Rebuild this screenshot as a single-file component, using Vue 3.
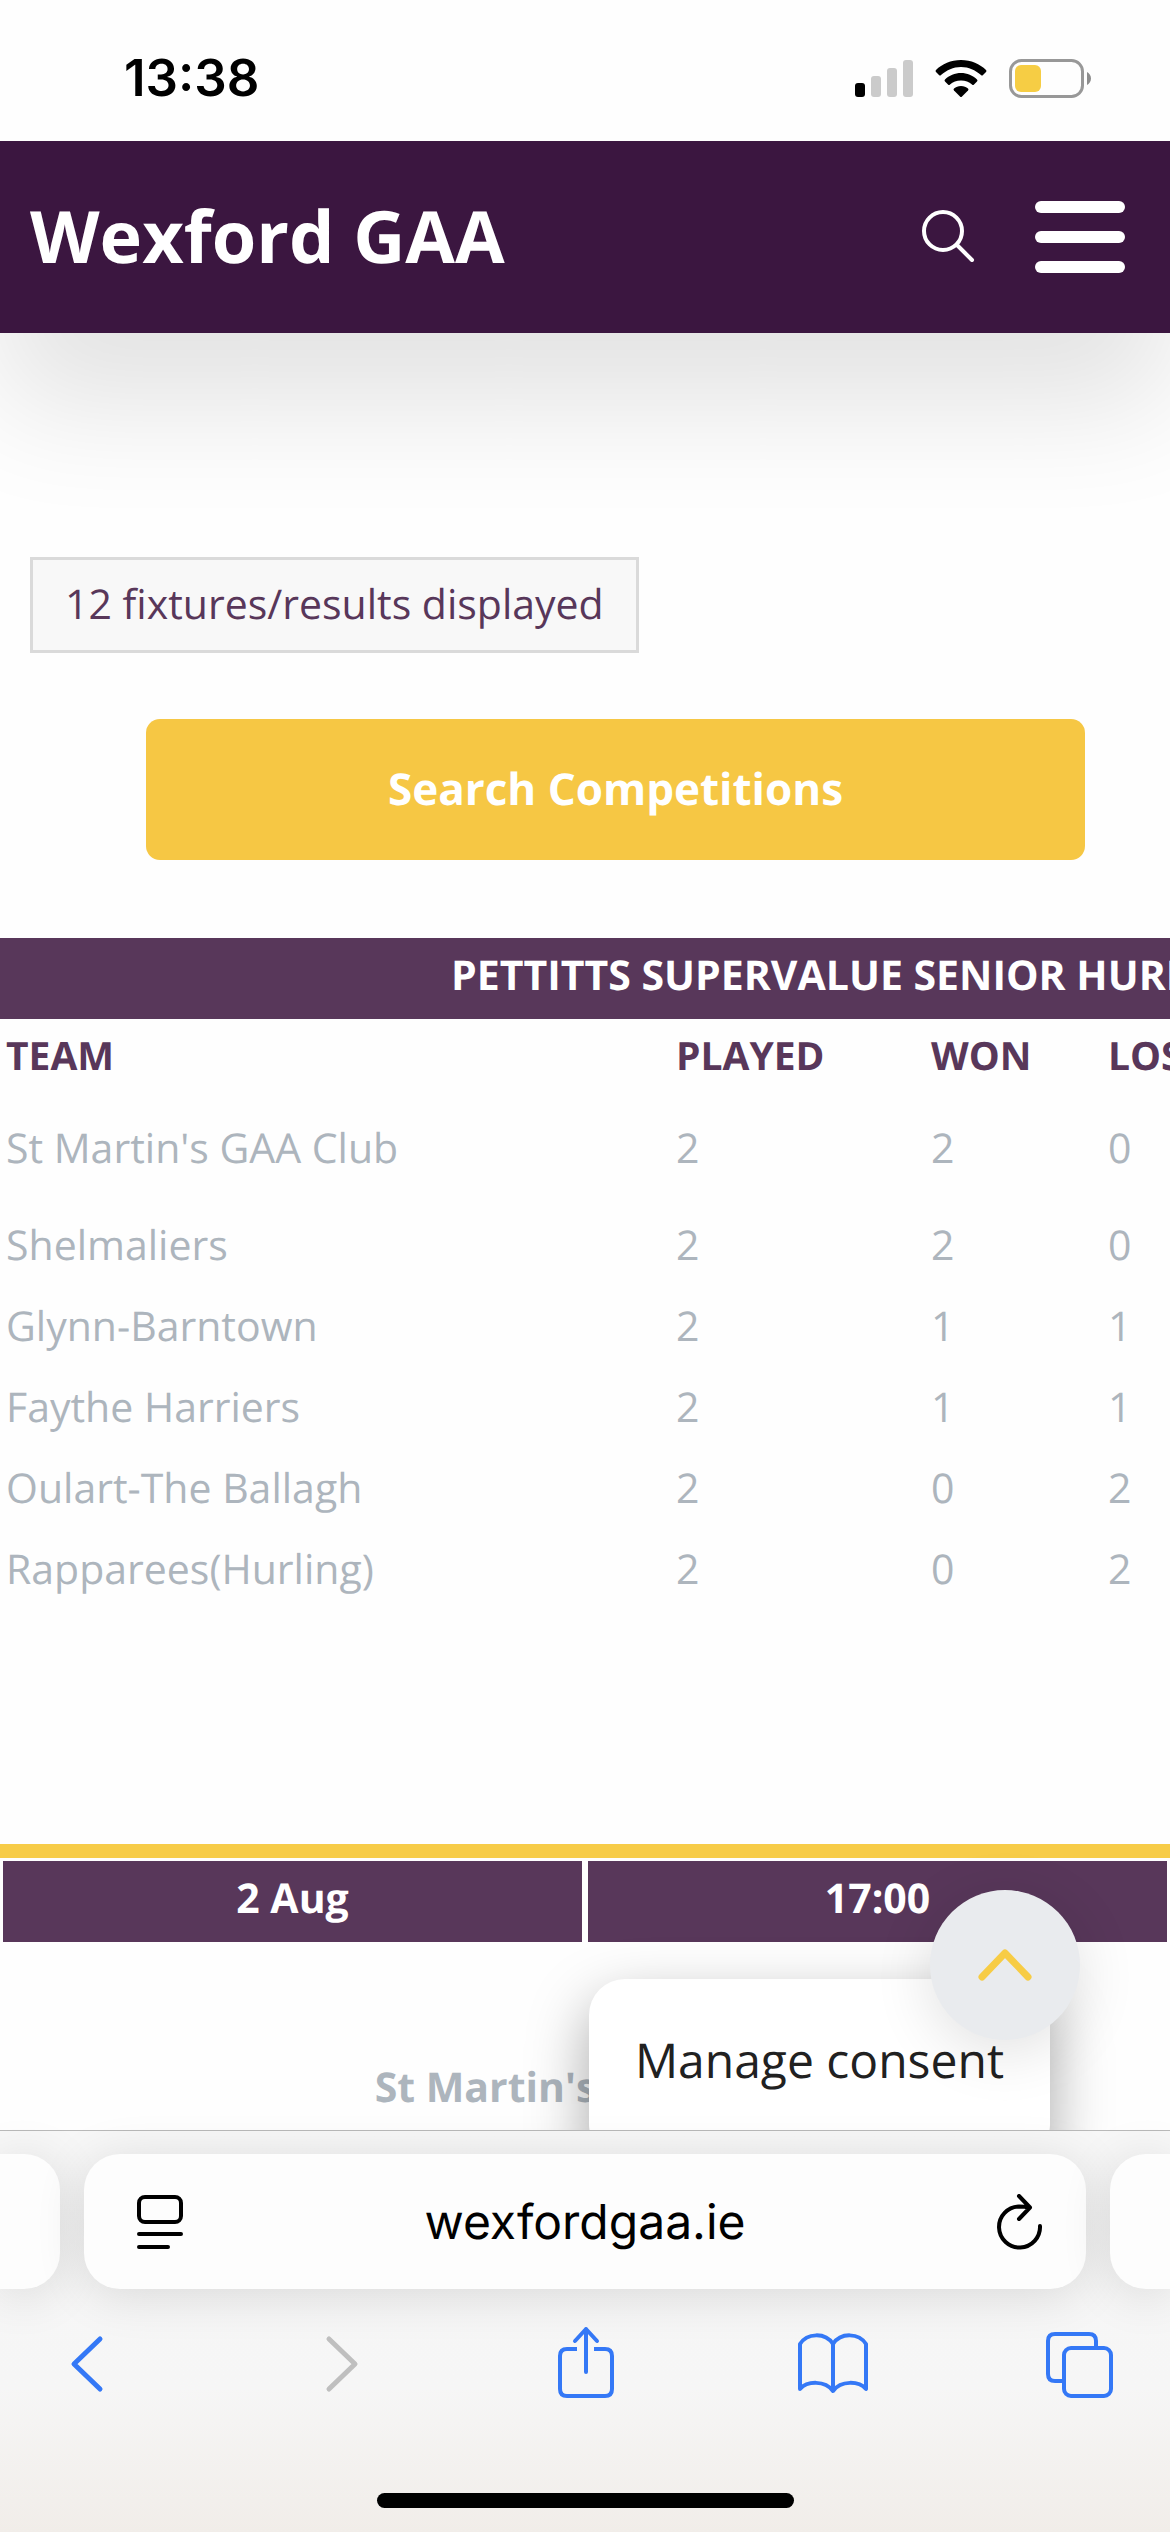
<script setup>
const columns = ['TEAM', 'PLAYED', 'WON', 'LOST']

const standings = [
  { team: "St Martin's GAA Club", played: 2, won: 2, lost: 0 },
  { team: 'Shelmaliers', played: 2, won: 2, lost: 0 },
  { team: 'Glynn-Barntown', played: 2, won: 1, lost: 1 },
  { team: 'Faythe Harriers', played: 2, won: 1, lost: 1 },
  { team: 'Oulart-The Ballagh', played: 2, won: 0, lost: 2 },
  { team: 'Rapparees(Hurling)', played: 2, won: 0, lost: 2 },
]
</script>

<template>
  <div class="screen">
    <div class="status-bar">
      <time class="clock">13:38</time>
      <div class="indicators">
        <svg class="signal" width="58" height="40" viewBox="0 0 58 40" aria-hidden="true">
          <rect x="0" y="25" width="10" height="14" rx="3" fill="#000" />
          <rect x="16" y="18" width="10" height="21" rx="3" fill="#cbcbcb" />
          <rect x="32" y="10" width="10" height="29" rx="3" fill="#cbcbcb" />
          <rect x="48" y="2" width="10" height="37" rx="3" fill="#cbcbcb" />
        </svg>
        <svg class="wifi" width="52" height="40" viewBox="0 0 52 40" aria-hidden="true">
          <path d="M26 2C36 2 45 6 51 12Q52 13 51 14L48 17Q47 18 46 17C40 12 34 9 26 9S12 12 6 17Q5 18 4 17L1 14Q0 13 1 12C7 6 16 2 26 2Z" />
          <path d="M26 15C32 15 38 17.500 42 21.500Q43 22.500 42 23.500L39 26.500Q38 27.500 37 26.500C34 24 30.500 22.500 26 22.500S18 24 15 26.500Q14 27.500 13 26.500L10 23.500Q9 22.500 10 21.500C14 17.500 20 15 26 15Z" />
          <path d="M26 28C29 28 31 29 33 30.500Q34 31.500 33 32.500L27 38.500Q26 39.500 25 38.500L19 32.500Q18 31.500 19 30.500C21 29 23 28 26 28Z" />
        </svg>
        <svg class="battery" width="83" height="40" viewBox="0 0 83 40" aria-hidden="true">
          <rect x="1.500" y="2.500" width="72" height="36" rx="11" fill="none" stroke="#989898" stroke-width="3" />
          <rect x="6" y="7" width="26" height="27" rx="6" fill="#f6cd44" />
          <path d="M78 14C80 15 82 17.500 82 20.500S80 26 78 27Z" fill="#8d8d8d" />
        </svg>
      </div>
    </div>

    <div class="page">
      <header class="site-header">
        <a class="brand" href="#">Wexford GAA</a>
        <div class="header-actions">
          <button class="icon-button" type="button" aria-label="Search">
            <svg width="56" height="56" viewBox="0 0 56 56" fill="none" stroke="#fff" stroke-width="4" stroke-linecap="round">
              <circle cx="24" cy="22" r="19" />
              <path d="M38 36L53 51" />
            </svg>
          </button>
          <button class="icon-button menu" type="button" aria-label="Menu">
            <span></span><span></span><span></span>
          </button>
        </div>
      </header>

      <main>
        <p class="count">12 fixtures/results displayed</p>
        <button class="search-button" type="button">Search Competitions</button>

        <table class="standings">
          <colgroup>
            <col class="col-team" />
            <col class="col-played" />
            <col class="col-won" />
            <col class="col-lost" />
          </colgroup>
          <thead>
            <tr class="competition">
              <th colspan="4">PETTITTS SUPERVALUE SENIOR HURLING</th>
            </tr>
            <tr class="headings">
              <th v-for="column in columns" :key="column" scope="col">{{ column }}</th>
            </tr>
          </thead>
          <tbody>
            <tr v-for="row in standings" :key="row.team">
              <td>{{ row.team }}</td>
              <td>{{ row.played }}</td>
              <td>{{ row.won }}</td>
              <td>{{ row.lost }}</td>
            </tr>
          </tbody>
        </table>

        <section class="fixture">
          <div class="fixture-when">
            <div>2 Aug</div>
            <div>17:00</div>
          </div>
          <p class="fixture-team">St Martin's GAA Club</p>
        </section>
      </main>

      <button class="consent" type="button">Manage consent</button>
      <button class="to-top" type="button" aria-label="Back to top">
        <svg width="60" height="40" viewBox="0 0 60 40" fill="none" stroke="#f7cc45" stroke-width="7" stroke-linecap="round" stroke-linejoin="round">
          <path d="M7 32L30 8L53 32" />
        </svg>
      </button>
    </div>

    <footer class="browser">
      <div class="tabs">
        <div class="tab tab-previous"></div>
        <div class="tab address">
          <button class="icon-button" type="button" aria-label="Page options">
            <svg width="46" height="56" viewBox="0 0 46 56" fill="none" stroke="#000" stroke-width="4" stroke-linecap="round">
              <rect x="2" y="3" width="42" height="25" rx="6" />
              <path d="M2 40H44M2 53H31" />
            </svg>
          </button>
          <span class="url">wexfordgaa.ie</span>
          <button class="icon-button" type="button" aria-label="Reload">
            <svg width="46" height="56" viewBox="0 0 46 56" fill="none" stroke="#000" stroke-width="4" stroke-linecap="round" stroke-linejoin="round">
              <path d="M43 32A20.500 20.500 0 1 1 22 12.500Q28 12.500 32 13.500M22 2L33 13.500L22 25" />
            </svg>
          </button>
        </div>
        <div class="tab tab-next"></div>
      </div>

      <nav class="toolbar">
        <button class="icon-button" type="button" aria-label="Back">
          <svg width="96" height="80" viewBox="0 0 96 80" fill="none" stroke="#3478f6" stroke-width="5" stroke-linecap="round" stroke-linejoin="round">
            <path d="M62 16L36 41L62 66" />
          </svg>
        </button>
        <button class="icon-button" type="button" aria-label="Forward" disabled>
          <svg width="96" height="80" viewBox="0 0 96 80" fill="none" stroke="#bfbfbf" stroke-width="5" stroke-linecap="round" stroke-linejoin="round">
            <path d="M42 16L68 41L42 66" />
          </svg>
        </button>
        <button class="icon-button" type="button" aria-label="Share">
          <svg width="96" height="80" viewBox="0 0 96 80" fill="none" stroke="#3478f6" stroke-width="4" stroke-linecap="round" stroke-linejoin="round">
            <path d="M42 26H32Q25 26 25 33V66Q25 73 32 73H70Q77 73 77 66V33Q77 26 70 26H59" stroke-linecap="butt" />
            <path d="M51 49V6M40 18L51 6L62 18" />
          </svg>
        </button>
        <button class="icon-button" type="button" aria-label="Bookmarks">
          <svg width="96" height="80" viewBox="0 0 96 80" fill="none" stroke="#3478f6" stroke-width="4" stroke-linecap="round" stroke-linejoin="round">
            <path d="M49 21C41 9 23 10 16 21V66C23 58 41 57 49 68C57 57 75 58 82 66V21C75 10 57 9 49 21ZM49 21V68" />
          </svg>
        </button>
        <button class="icon-button" type="button" aria-label="Tabs">
          <svg width="96" height="80" viewBox="0 0 96 80" fill="none" stroke="#3478f6" stroke-width="4" stroke-linecap="round" stroke-linejoin="round">
            <rect x="32" y="25" width="47" height="48" rx="7" />
            <path d="M31 58H23Q16 58 16 51V18Q16 11 23 11H57Q64 11 64 18V24" stroke-linecap="butt" />
          </svg>
        </button>
      </nav>

      <div class="home-indicator"></div>
    </footer>
  </div>
</template>

<style>
body {
  margin: 0;
  background: #fff;
}
</style>

<style scoped>
.screen {
  display: flex;
  flex-direction: column;
  height: 100vh;
  overflow: hidden;
  background: #fefefe;
  font-family: "Open Sans", sans-serif;
  font-size: 41px;
  line-height: 63px;
  text-rendering: geometricPrecision;
}

button {
  margin: 0;
  padding: 0;
  border: 0;
  background: none;
  font: inherit;
  text-rendering: inherit;
}

p {
  margin: 0;
}

svg {
  display: block;
}

.icon-button {
  display: flex;
  align-items: center;
  justify-content: center;
}

/* Status bar */
.status-bar {
  display: flex;
  flex: none;
  align-items: center;
  justify-content: space-between;
  height: 141px;
  padding: 0 78px 0 124px;
}

.clock {
  padding-top: 15px;
  font-family: Inter, sans-serif;
  font-size: 51px;
  font-weight: 600;
  color: #000;
}

.indicators {
  display: flex;
  gap: 22px;
  padding-top: 14px;
}

/* Site header */
.page {
  position: relative;
  flex: 1;
  min-height: 0;
  overflow: hidden;
}

.site-header {
  display: flex;
  align-items: center;
  justify-content: space-between;
  height: 192px;
  padding: 0 45px 0 30px;
  background: #3b1640;
  box-shadow: 0 72px 120px rgba(0, 0, 0, 0.11);
}

.brand {
  padding-bottom: 2px;
  font-size: 72px;
  font-weight: 700;
  line-height: 96px;
  color: #fff;
  text-decoration: none;
}

.header-actions {
  display: flex;
  align-items: center;
  gap: 60px;
}

.menu {
  flex-direction: column;
  gap: 18px;
  width: 90px;
}

.menu span {
  width: 100%;
  height: 12px;
  border-radius: 6px;
  background: #fff;
}

/* Page content */
main {
  padding-top: 224px;
}

.count {
  width: fit-content;
  margin-left: 30px;
  padding: 13px 32px 14px;
  border: 3px solid #dadada;
  background: #f8f8f8;
  color: #58375a;
}

.search-button {
  display: block;
  width: calc(100% - 231px);
  height: 141px;
  margin: 66px 85px 78px 146px;
  padding-bottom: 3px;
  border-radius: 14px;
  background: #f6c744;
  font-size: 44px;
  font-weight: 700;
  color: #fff;
}

.standings {
  width: 1232px;
  border-collapse: collapse;
  table-layout: fixed;
  color: #adb5bd;
}

.col-team {
  width: 670px;
}

.col-played {
  width: 255px;
}

.col-won {
  width: 177px;
}

.col-lost {
  width: 130px;
}

.standings th,
.standings td {
  padding: 6px 6px 12px;
  text-align: left;
  white-space: nowrap;
}

.competition {
  background: #58375a;
  color: #fff;
}

.standings .competition th {
  padding-left: 451px;
}

.headings {
  font-size: 39px;
  line-height: 58px;
  color: #58375a;
}

.standings .headings th {
  padding-top: 8px;
  padding-bottom: 10px;
}

.standings tbody tr:first-child td {
  padding-top: 22px;
  padding-bottom: 28px;
}

.fixture {
  margin-top: 231px;
  border-top: 14px solid #f7cc48;
  font-weight: 700;
  text-align: center;
}

.fixture-when {
  display: grid;
  grid-template-columns: 1fr 1fr;
  gap: 6px;
  padding: 3px;
}

.fixture-when div {
  padding: 6px 6px 12px;
  background: #58375a;
  color: #fff;
}

.fixture-team {
  padding-top: 111px;
  color: #adb5bd;
}

/* Floating controls over the page */
.consent {
  position: absolute;
  right: 120px;
  bottom: -30px;
  padding: 50px 46px 68px;
  border-radius: 36px;
  background: #fff;
  box-shadow: 0 24px 60px rgba(0, 0, 0, 0.35);
  font-size: 48px;
  color: #212121;
}

.to-top {
  position: absolute;
  right: 90px;
  bottom: 90px;
  display: flex;
  align-items: center;
  justify-content: center;
  width: 150px;
  height: 150px;
  border-radius: 50%;
  background: #e9ebee;
  box-shadow: 0 12px 60px rgba(0, 0, 0, 0.12);
}

/* Browser chrome */
.browser {
  position: relative;
  flex: none;
  border-top: 1px solid #b9b9b9;
  background: linear-gradient(#f7f7f7 0%, #f6f6f6 64%, #f1ede9 100%);
}

.tabs {
  display: grid;
  grid-template-columns: 60px 1fr 60px;
  gap: 24px;
  padding-top: 23px;
}

.tab {
  height: 135px;
  background: #fdfdfd;
  box-shadow: 0 6px 50px rgba(0, 0, 0, 0.12);
}

.tab-previous {
  border-radius: 0 36px 36px 0;
}

.tab-next {
  border-radius: 36px 0 0 36px;
}

.address {
  display: flex;
  align-items: center;
  justify-content: space-between;
  padding: 0 43px 0 53px;
  border-radius: 36px;
}

.url {
  margin-right: 10px;
  font-family: Inter, sans-serif;
  font-size: 48px;
  color: #000;
}

.toolbar {
  display: flex;
  justify-content: space-between;
  padding: 34px 42px 0 38px;
}

.home-indicator {
  width: 417px;
  height: 15px;
  margin: 90px auto 24px;
  border-radius: 8px;
  background: #000;
}
</style>
